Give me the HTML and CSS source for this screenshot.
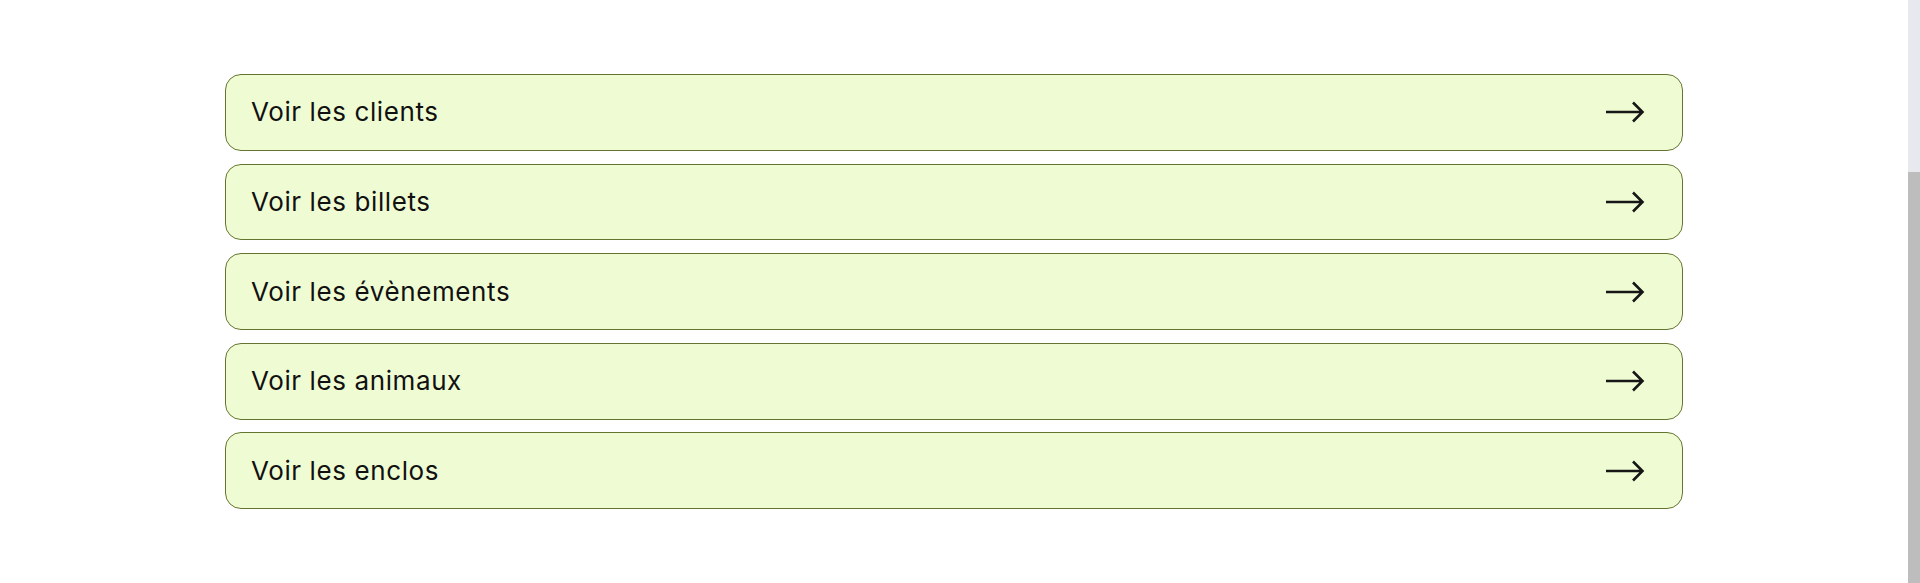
FILE: index.html
```html
<!DOCTYPE html>
<html lang="fr">
<head>
<meta charset="utf-8">
<title>Menu</title>
<link rel="stylesheet" href="styles.css">
</head>
<body>
<main class="page">
  <nav class="links">
    <a class="card" href="#"><span class="label">Voir les clients</span><svg class="arrow" viewBox="0 0 40 22" width="40" height="22"><path d="M1 11H37M28 1.5L37.5 11L28 20.5" fill="none" stroke="#161616" stroke-width="2.6"/></svg></a>
    <a class="card" href="#"><span class="label">Voir les billets</span><svg class="arrow" viewBox="0 0 40 22" width="40" height="22"><path d="M1 11H37M28 1.5L37.5 11L28 20.5" fill="none" stroke="#161616" stroke-width="2.6"/></svg></a>
    <a class="card" href="#"><span class="label">Voir les évènements</span><svg class="arrow" viewBox="0 0 40 22" width="40" height="22"><path d="M1 11H37M28 1.5L37.5 11L28 20.5" fill="none" stroke="#161616" stroke-width="2.6"/></svg></a>
    <a class="card" href="#"><span class="label">Voir les animaux</span><svg class="arrow" viewBox="0 0 40 22" width="40" height="22"><path d="M1 11H37M28 1.5L37.5 11L28 20.5" fill="none" stroke="#161616" stroke-width="2.6"/></svg></a>
    <a class="card" href="#"><span class="label">Voir les enclos</span><svg class="arrow" viewBox="0 0 40 22" width="40" height="22"><path d="M1 11H37M28 1.5L37.5 11L28 20.5" fill="none" stroke="#161616" stroke-width="2.6"/></svg></a>
  </nav>
</main>
<div class="scrollbar"><div class="thumb"></div></div>
</body>
</html>
```
FILE: styles.css
```css
html, body {
  margin: 0;
  padding: 0;
  height: 583px;
  overflow: hidden;
  background: #ffffff;
}
body {
  font-family: Inter, "Liberation Sans", sans-serif;
}
.page {
  width: 1908px;
  padding-top: 74px;
}
.links {
  width: 1458px;
  margin: 0 auto;
  display: flex;
  flex-direction: column;
  gap: 12.8px;
}
.card {
  box-sizing: border-box;
  height: 76.8px;
  display: flex;
  align-items: center;
  justify-content: space-between;
  padding: 0 37px 0 25px;
  background: #effcd3;
  border: 1px solid #65752f;
  border-radius: 16px;
  color: #111111;
  text-decoration: none;
}
.label {
  font-size: 26px;
  line-height: 1;
  letter-spacing: 0.6px;
}
.arrow {
  display: block;
}
.scrollbar {
  position: fixed;
  top: 0;
  right: 0;
  width: 12px;
  height: 583px;
  background: #e8e8ef;
}
.thumb {
  margin-top: 172px;
  height: 411px;
  background: #bdbdbd;
}
```
